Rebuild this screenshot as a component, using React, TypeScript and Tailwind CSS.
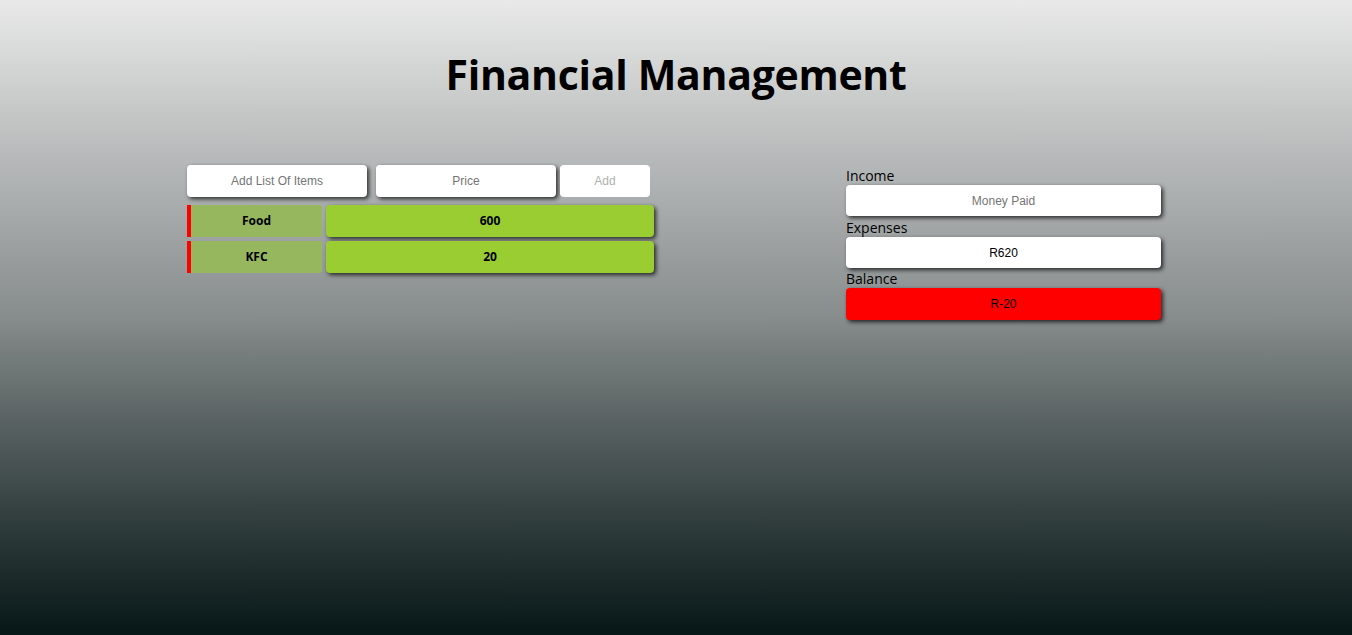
export default function App() {
  const items = [
    { name: "Food", price: 600 },
    { name: "KFC", price: 20 },
  ];

  return (
    <div className="min-h-screen w-full bg-gradient-to-b from-[#e9e9e9] via-[#878c8c] to-[#071717] font-['Open_Sans',sans-serif] text-black">
      <h1 className="pt-[44px] text-center text-[41px] font-bold leading-[60px] tracking-[-0.3px]">
        Financial Management
      </h1>

      <div className="mt-[61px] flex">
        {/* left: item list */}
        <div className="ml-[187px] w-[468px]">
          <div className="flex font-['Liberation_Sans',sans-serif] text-[12px]">
            <input
              placeholder="Add List Of Items"
              className="h-[32px] w-[180px] rounded-[4px] bg-white text-center shadow-[2px_2px_4px_rgba(0,0,0,0.75)] outline-none placeholder:text-[#757575]"
            />
            <input
              placeholder="Price"
              className="ml-[9px] h-[32px] w-[180px] rounded-[4px] bg-white text-center shadow-[2px_2px_4px_rgba(0,0,0,0.75)] outline-none placeholder:text-[#757575]"
            />
            <button className="ml-[4px] h-[32px] w-[90px] rounded-[4px] bg-white text-[#b0b0b0]">
              Add
            </button>
          </div>

          <div className="mt-[8px] flex flex-col gap-[4px]">
            {items.map((it) => (
              <div key={it.name} className="flex h-[32px] gap-[4px] text-[12px] font-bold">
                <div className="flex w-[135px] items-center justify-center rounded-r-[3px] border-l-4 border-[#ff0000] bg-[#97b75f]">
                  {it.name}
                </div>
                <div className="flex w-[328px] items-center justify-center rounded-[4px] bg-[#9acd32] shadow-[2px_2px_4px_rgba(0,0,0,0.75)]">
                  {it.price}
                </div>
              </div>
            ))}
          </div>
        </div>

        {/* right: summary */}
        <div className="ml-[191px] mt-[1px] w-[315px] text-[14px]">
          <div className="leading-[19px]">Income</div>
          <input
            placeholder="Money Paid"
            className="h-[31px] w-full rounded-[4px] bg-white text-center font-['Liberation_Sans',sans-serif] text-[12px] shadow-[2px_2px_4px_rgba(0,0,0,0.75)] outline-none placeholder:text-[#757575]"
          />
          <div className="mt-[2px] leading-[19px]">Expenses</div>
          <div className="flex h-[31px] items-center justify-center rounded-[4px] bg-white font-['Liberation_Sans',sans-serif] text-[12px] shadow-[2px_2px_4px_rgba(0,0,0,0.75)]">
            R620
          </div>
          <div className="mt-[1px] leading-[19px]">Balance</div>
          <div className="flex h-[32px] items-center justify-center rounded-[4px] bg-[#ff0000] font-['Liberation_Sans',sans-serif] text-[12px] shadow-[2px_2px_4px_rgba(0,0,0,0.75)]">
            R-20
          </div>
        </div>
      </div>
    </div>
  );
}
